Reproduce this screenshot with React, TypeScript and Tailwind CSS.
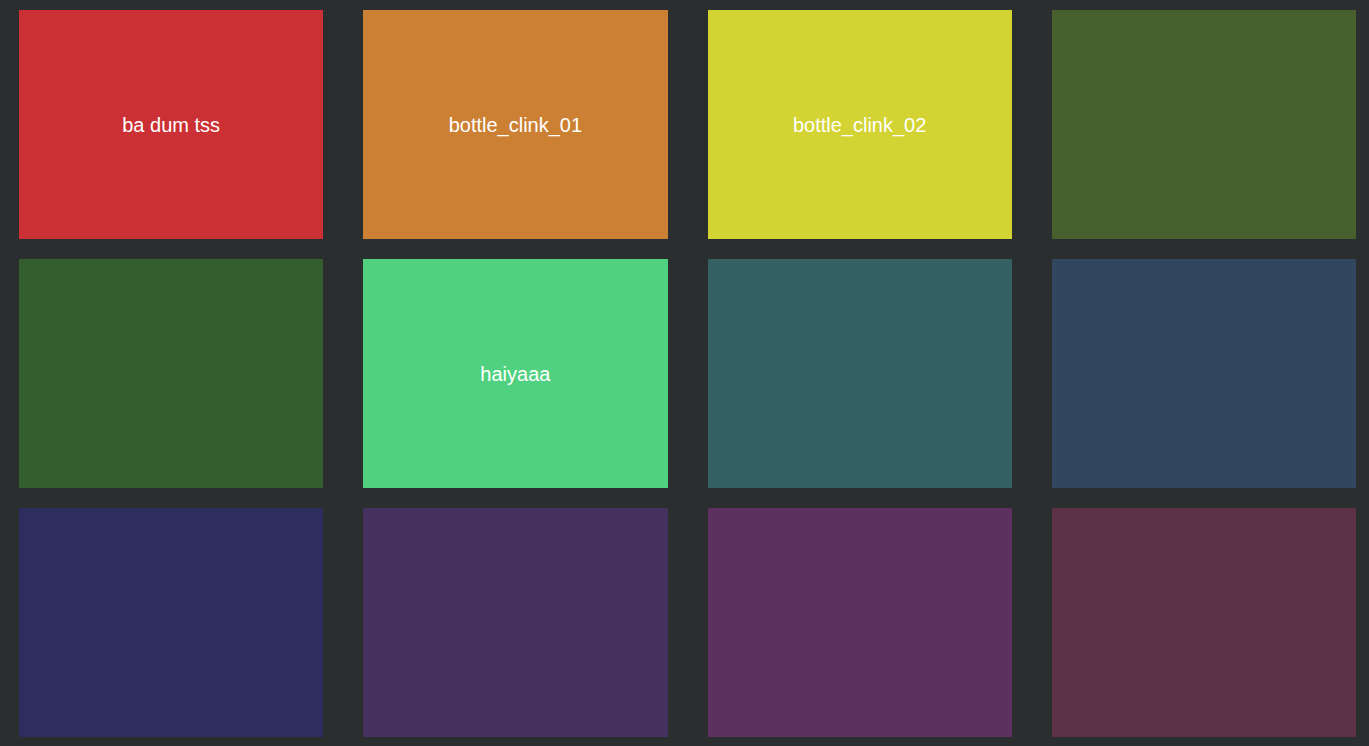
const pads = [
  { label: 'ba dum tss', color: 'bg-[#cb3034]' },
  { label: 'bottle_clink_01', color: 'bg-[#cb8033]' },
  { label: 'bottle_clink_02', color: 'bg-[#d3d333]' },
  { label: '', color: 'bg-[#48602e]' },
  { label: '', color: 'bg-[#345e2e]' },
  { label: 'haiyaaa', color: 'bg-[#50d17f]' },
  { label: '', color: 'bg-[#356061]' },
  { label: '', color: 'bg-[#31475f]' },
  { label: '', color: 'bg-[#2e2d5f]' },
  { label: '', color: 'bg-[#45305f]' },
  { label: '', color: 'bg-[#5c305f]' },
  { label: '', color: 'bg-[#5c3045]' },
]

export default function App() {
  return (
    <div className="h-[746px] overflow-hidden bg-[#2b2e2f] pl-[19px] pr-[13px] pt-[10px] font-['Liberation_Sans',Arial,sans-serif]">
      <div className="grid grid-cols-4 gap-x-[40px] gap-y-[20px]">
        {pads.map((p, i) => (
          <button
            key={i}
            className={`flex h-[229px] items-center justify-center text-[20px] text-white ${p.color}`}
          >
            {p.label}
          </button>
        ))}
      </div>
    </div>
  )
}
